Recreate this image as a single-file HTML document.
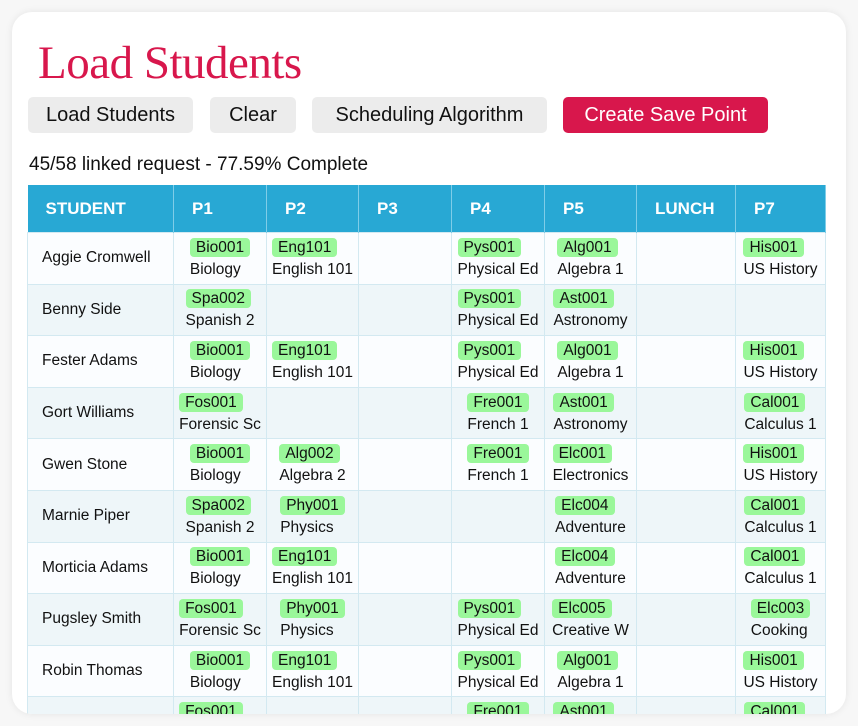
<!DOCTYPE html>
<html><head><meta charset="utf-8"><style>
body{margin:0;width:858px;height:726px;background:#f7f7f7;font-family:"Liberation Sans",sans-serif;overflow:hidden;position:relative}
.card{position:absolute;left:12px;top:12px;width:834px;height:702px;background:#fff;border-radius:20px;box-shadow:0 0 8px rgba(0,0,0,.08);overflow:hidden}
h1{position:absolute;left:26px;top:24px;margin:0;font-family:"Liberation Serif",serif;font-weight:normal;font-size:47px;color:#d8174c;letter-spacing:-0.5px}
.btn{position:absolute;top:85px;height:36px;border-radius:5px;background:#ececec;font-size:20px;line-height:36px;text-align:center;color:#111}
.stat{position:absolute;left:17px;top:142px;font-size:19px;color:#111}
table{position:absolute;left:15px;top:173px;border-collapse:collapse;font-size:15.5px;color:#111;table-layout:fixed}
th{background:#28a8d4;color:#fff;height:47px;text-align:left;padding:0 0 0 18px;font-size:17px;border-right:1px solid #7fcde8}
td{height:50.6px;border:1px solid #d3e9f1;padding:0;text-align:center}
td.n{text-align:left;padding-left:14px}
tr:nth-child(odd) td{background:#eef6f9}
tr:nth-child(even) td{background:#fbfdff}
.c{display:inline-block;text-align:left;line-height:21px}
.t{display:inline-block;background:#9af79a;border-radius:4px;padding:0 6px;line-height:19px;margin-bottom:2px}
</style></head><body><div class="card">
<h1>Load Students</h1>
<div class="btn" style="left:16px;width:165px">Load Students</div>
<div class="btn" style="left:198px;width:86px">Clear</div>
<div class="btn" style="left:300px;width:235px">Scheduling Algorithm</div>
<div class="btn" style="left:551px;width:205px;background:#d8174c;color:#fff">Create Save Point</div>
<div class="stat">45/58 linked request - 77.59% Complete</div>
<table>
<colgroup><col style="width:146px"><col style="width:93px"><col style="width:92px"><col style="width:93px"><col style="width:93px"><col style="width:92px"><col style="width:99px"><col style="width:90px"></colgroup>
<tr><th>STUDENT</th><th>P1</th><th>P2</th><th>P3</th><th>P4</th><th>P5</th><th>LUNCH</th><th>P7</th></tr>
<tr><td class="n">Aggie Cromwell</td><td><div class="c"><span class="t">Bio001</span><br>Biology</div></td><td><div class="c"><span class="t">Eng101</span><br>English 101</div></td><td></td><td><div class="c"><span class="t">Pys001</span><br>Physical Ed</div></td><td><div class="c"><span class="t">Alg001</span><br>Algebra 1</div></td><td></td><td><div class="c"><span class="t">His001</span><br>US History</div></td></tr>
<tr><td class="n">Benny Side</td><td><div class="c"><span class="t">Spa002</span><br>Spanish 2</div></td><td></td><td></td><td><div class="c"><span class="t">Pys001</span><br>Physical Ed</div></td><td><div class="c"><span class="t">Ast001</span><br>Astronomy</div></td><td></td><td></td></tr>
<tr><td class="n">Fester Adams</td><td><div class="c"><span class="t">Bio001</span><br>Biology</div></td><td><div class="c"><span class="t">Eng101</span><br>English 101</div></td><td></td><td><div class="c"><span class="t">Pys001</span><br>Physical Ed</div></td><td><div class="c"><span class="t">Alg001</span><br>Algebra 1</div></td><td></td><td><div class="c"><span class="t">His001</span><br>US History</div></td></tr>
<tr><td class="n">Gort Williams</td><td><div class="c"><span class="t">Fos001</span><br>Forensic Sc</div></td><td></td><td></td><td><div class="c"><span class="t">Fre001</span><br>French 1</div></td><td><div class="c"><span class="t">Ast001</span><br>Astronomy</div></td><td></td><td><div class="c"><span class="t">Cal001</span><br>Calculus 1</div></td></tr>
<tr><td class="n">Gwen Stone</td><td><div class="c"><span class="t">Bio001</span><br>Biology</div></td><td><div class="c"><span class="t">Alg002</span><br>Algebra 2</div></td><td></td><td><div class="c"><span class="t">Fre001</span><br>French 1</div></td><td><div class="c"><span class="t">Elc001</span><br>Electronics</div></td><td></td><td><div class="c"><span class="t">His001</span><br>US History</div></td></tr>
<tr><td class="n">Marnie Piper</td><td><div class="c"><span class="t">Spa002</span><br>Spanish 2</div></td><td><div class="c"><span class="t">Phy001</span><br>Physics</div></td><td></td><td></td><td><div class="c"><span class="t">Elc004</span><br>Adventure</div></td><td></td><td><div class="c"><span class="t">Cal001</span><br>Calculus 1</div></td></tr>
<tr><td class="n">Morticia Adams</td><td><div class="c"><span class="t">Bio001</span><br>Biology</div></td><td><div class="c"><span class="t">Eng101</span><br>English 101</div></td><td></td><td></td><td><div class="c"><span class="t">Elc004</span><br>Adventure</div></td><td></td><td><div class="c"><span class="t">Cal001</span><br>Calculus 1</div></td></tr>
<tr><td class="n">Pugsley Smith</td><td><div class="c"><span class="t">Fos001</span><br>Forensic Sc</div></td><td><div class="c"><span class="t">Phy001</span><br>Physics</div></td><td></td><td><div class="c"><span class="t">Pys001</span><br>Physical Ed</div></td><td><div class="c"><span class="t">Elc005</span><br>Creative W</div></td><td></td><td><div class="c"><span class="t">Elc003</span><br>Cooking</div></td></tr>
<tr><td class="n">Robin Thomas</td><td><div class="c"><span class="t">Bio001</span><br>Biology</div></td><td><div class="c"><span class="t">Eng101</span><br>English 101</div></td><td></td><td><div class="c"><span class="t">Pys001</span><br>Physical Ed</div></td><td><div class="c"><span class="t">Alg001</span><br>Algebra 1</div></td><td></td><td><div class="c"><span class="t">His001</span><br>US History</div></td></tr>
<tr><td class="n"></td><td><div class="c"><span class="t">Fos001</span><br>Forensic Sc</div></td><td></td><td></td><td><div class="c"><span class="t">Fre001</span><br>French 1</div></td><td><div class="c"><span class="t">Ast001</span><br>Astronomy</div></td><td></td><td><div class="c"><span class="t">Cal001</span><br>Calculus 1</div></td></tr>
</table>
</div></body></html>
